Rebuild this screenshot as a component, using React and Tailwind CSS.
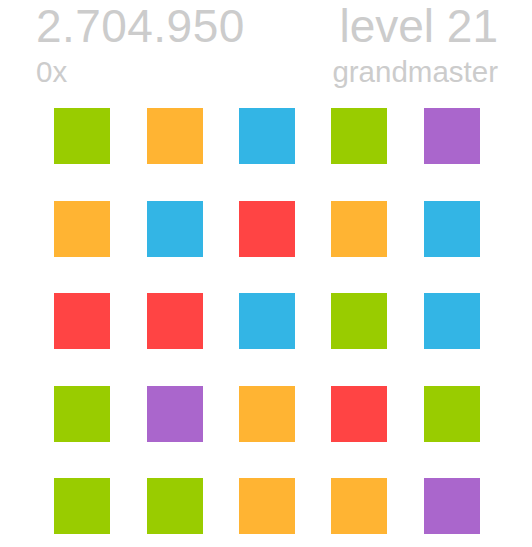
export default function App() {
  const G = "bg-[#99cc00]";
  const O = "bg-[#ffb433]";
  const B = "bg-[#33b5e5]";
  const R = "bg-[#ff4444]";
  const P = "bg-[#aa66cc]";
  const rows = [
    [G, O, B, G, P],
    [O, B, R, O, B],
    [R, R, B, G, B],
    [G, P, O, R, G],
    [G, G, O, O, P],
  ];
  return (
    <div className="w-[532px] h-[547px] overflow-hidden bg-white">
      <div className="w-[462px] ml-[36px] text-[#cccccc]">
        <div className="flex justify-between items-start h-[90px]" style={{ fontFamily: '"Liberation Sans", Arial, sans-serif' }}>
          <div className="flex flex-col">
            <div className="text-[46px] leading-none mt-[3px] tracking-[0.45px]">2.704.950</div>
            <div className="text-[29.5px] leading-none mt-[8px]">0x</div>
          </div>
          <div className="flex flex-col items-end">
            <div className="text-[46px] leading-none mt-[3px]">level 21</div>
            <div className="text-[29.5px] leading-none mt-[8px]">grandmaster</div>
          </div>
        </div>
        <div className="grid grid-cols-5">
          {rows.flat().map((c, i) => (
            <div key={i} className="h-[92.5px] flex items-center justify-center">
              <div className={`w-[56px] h-[56px] ${c}`} />
            </div>
          ))}
        </div>
      </div>
    </div>
  );
}
